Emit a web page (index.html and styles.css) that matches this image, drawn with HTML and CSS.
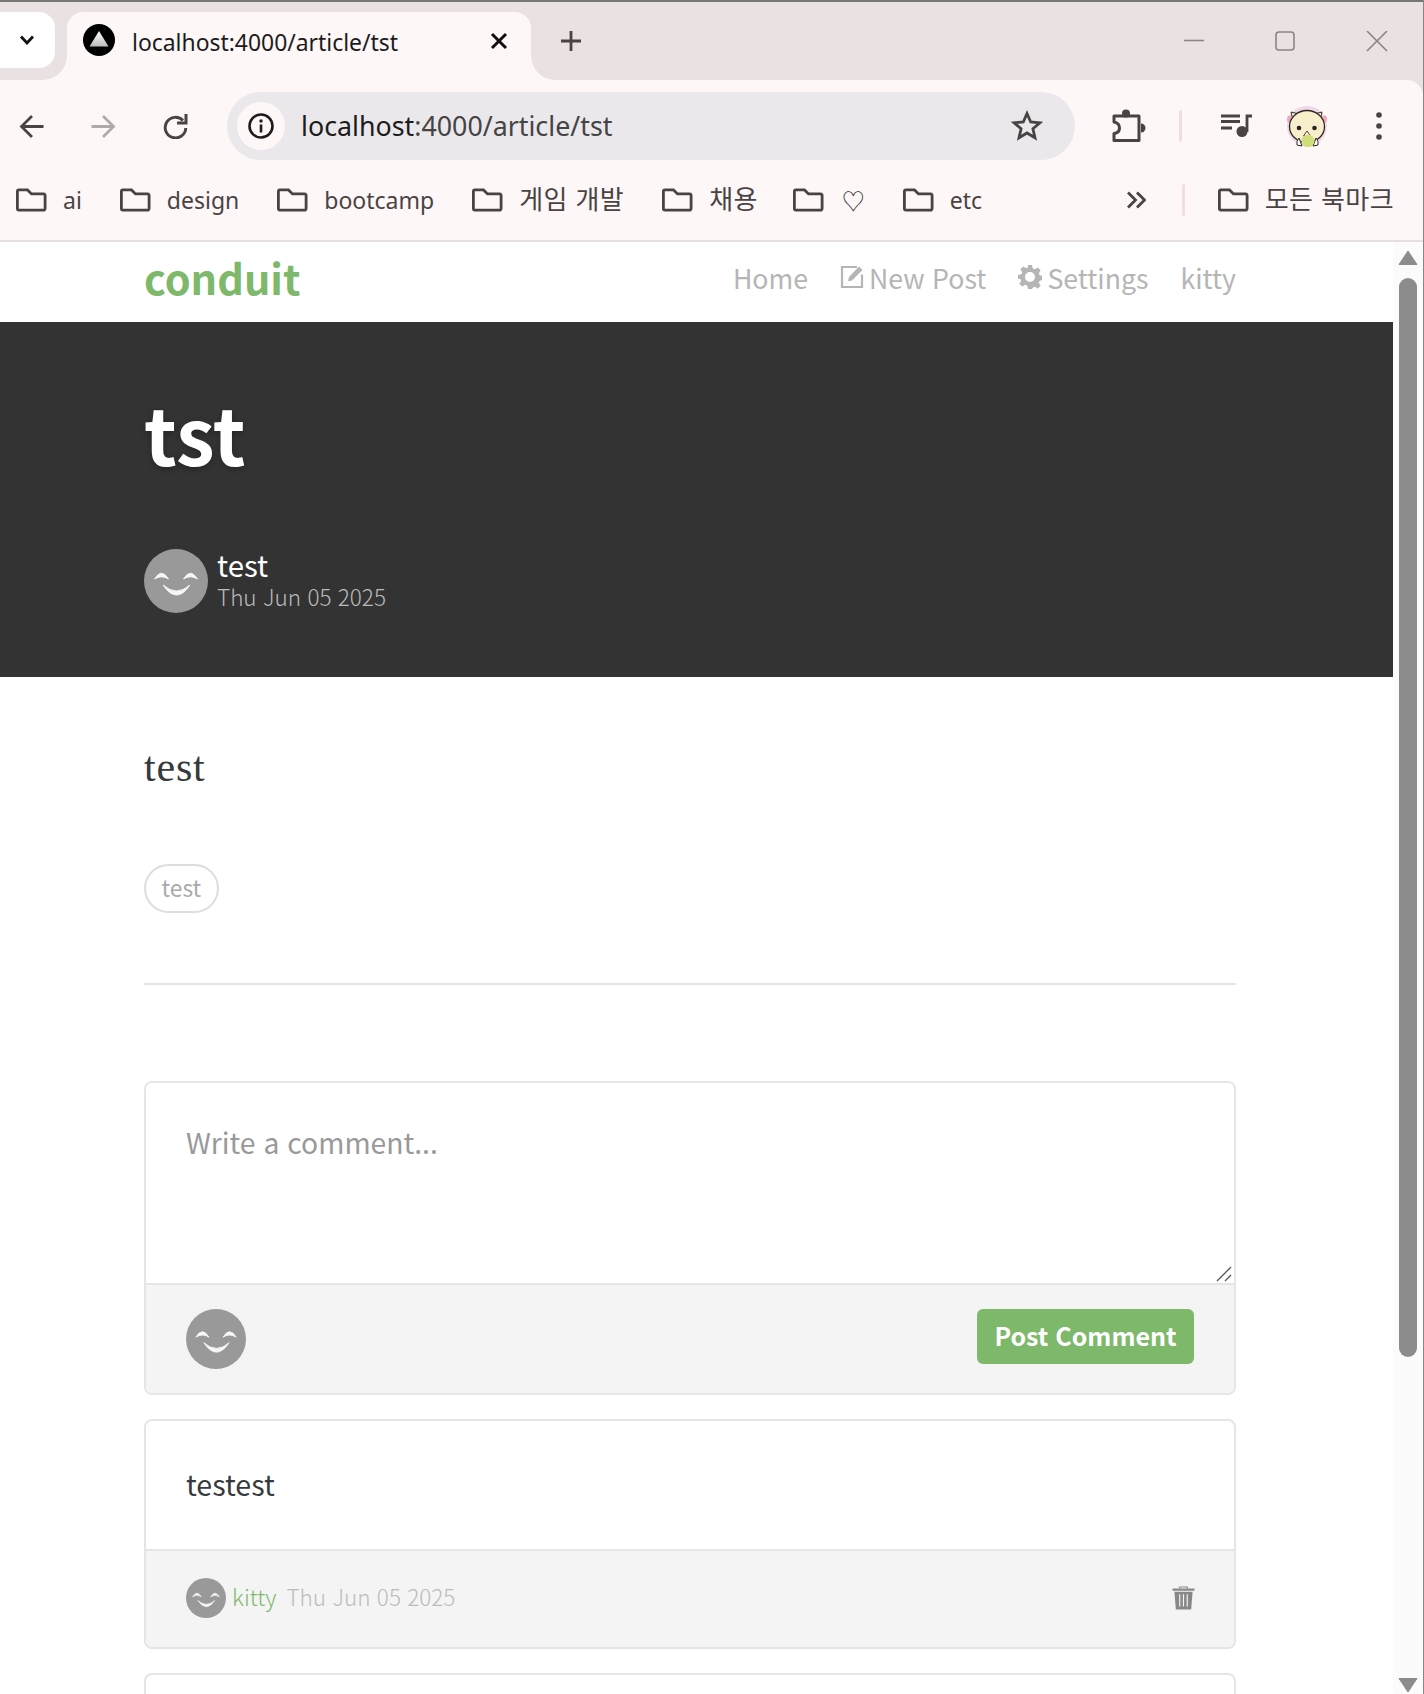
FILE: index.html
```html
<!DOCTYPE html>
<html lang="ko">
<head>
<meta charset="utf-8">
<title>tst</title>
<link rel="stylesheet" href="styles.css">
</head>
<body>
<svg class="defs" width="0" height="0" aria-hidden="true">
  <symbol id="folder" viewBox="0 0 32 24"><path d="M2.4 3.4a1.5 1.5 0 0 1 1.5-1.5h8.6l4 4h12.100a1.500 1.500 0 0 1 1.500 1.500v13.200a1.500 1.500 0 0 1-1.500 1.500H3.900a1.500 1.500 0 0 1-1.500-1.500z" fill="none" stroke="currentColor" stroke-width="2.800"/></symbol>
  <symbol id="smile" viewBox="0 0 64 64"><circle cx="32" cy="32" r="32" fill="#999"/><path d="M10.500 30Q17.500 18.500 24.500 30Q17.500 25.500 10.500 30ZM39.500 30Q46.500 18.500 53.500 30Q46.500 25.500 39.500 30ZM19 36Q32.500 56 46 36Q32.500 48 19 36Z" fill="#f6f6f6" stroke="#f6f6f6" stroke-width="1" stroke-linejoin="round"/></symbol>
</svg>

<header class="browser">
  <div class="tabstrip">
    <button class="tab-list"><svg width="16" height="10" viewBox="0 0 16 10"><path d="M2 1.500L8 8l6-6.500" fill="none" stroke="#111" stroke-width="2.800"/></svg></button>
    <div class="tab">
      <svg class="favicon" width="32" height="32" viewBox="0 0 32 32"><defs><linearGradient id="fav" x1="0" y1="0" x2="0" y2="1"><stop offset="0" stop-color="#fff"/><stop offset="1" stop-color="#bbb"/></linearGradient></defs><circle cx="16" cy="16" r="16" fill="#000"/><path d="M16 7l9.500 15.500h-19z" fill="url(#fav)"/></svg>
      <span class="tab-title">localhost:4000/article/tst</span>
      <svg class="tab-close" width="18" height="18" viewBox="0 0 18 18"><path d="M2 2l14 14M16 2L2 16" stroke="#111" stroke-width="3"/></svg>
    </div>
    <svg class="new-tab" width="22" height="22" viewBox="0 0 22 22"><path d="M11 1v20M1 11h20" stroke="#4a4343" stroke-width="2.800"/></svg>
    <div class="win-controls">
      <svg width="20" height="20" viewBox="0 0 20 20"><path d="M0 9.500h20" stroke="#8a8585" stroke-width="1.600"/></svg>
      <svg width="20" height="20" viewBox="0 0 20 20"><rect x="1" y="1" width="18" height="18" rx="3" fill="none" stroke="#8a8585" stroke-width="1.600"/></svg>
      <svg width="22" height="22" viewBox="0 0 22 22"><path d="M1 0l20 20M21 0L1 20" stroke="#8a8585" stroke-width="1.600"/></svg>
    </div>
  </div>

  <div class="toolbar">
    <svg class="tb-back" width="25" height="25" viewBox="0 0 25 25"><path d="M24.500 12.500H3M13 2L2.500 12.500 13 23" fill="none" stroke="#4a4343" stroke-width="2.800"/></svg>
    <svg class="tb-forward" width="25" height="25" viewBox="0 0 25 25"><path d="M.5 12.500H22M12 2l10.500 10.500L12 23" fill="none" stroke="#aeaaaa" stroke-width="2.800"/></svg>
    <svg class="tb-reload" width="25" height="25" viewBox="0 0 25 25"><path d="M20 6.500A10.300 10.300 0 1 0 22.800 14" fill="none" stroke="#4a4343" stroke-width="2.900"/><path d="M24.500 0v10.500H14V7.500h7.500V0z" fill="#4a4343"/></svg>
    <div class="omnibox">
      <div class="info-chip"><svg width="26" height="26" viewBox="0 0 26 26"><circle cx="13" cy="13" r="11.500" fill="none" stroke="#1c1c1c" stroke-width="2.600"/><circle cx="13" cy="8" r="1.700" fill="#1c1c1c"/><path d="M13 11.500v8" stroke="#1c1c1c" stroke-width="2.600"/></svg></div>
      <span class="url"><span class="url-host">localhost</span>:4000/article/tst</span>
      <svg class="star" width="32" height="32" viewBox="0 0 32 32"><path d="M16 3.500l3.700 8.500 9.200.8-7 6 2.100 9-8-4.800-8 4.800 2.100-9-7-6 9.200-.8z" fill="none" stroke="#4a4343" stroke-width="2.800" stroke-linejoin="miter"/></svg>
    </div>
    <svg class="tb-ext" width="34" height="34" viewBox="0 0 34 34"><path d="M2 7H27V31.500H2V24.500C6 24 7.500 21.500 7.500 19S6 13.500 2 13z" fill="none" stroke="#4a4343" stroke-width="3" stroke-linejoin="round"/><circle cx="14" cy="4.500" r="4" fill="#4a4343"/><path d="M27 14.500a4.500 4.500 0 0 1 0 9z" fill="#4a4343" transform="translate(2 0)"/></svg>
    <span class="tb-sep"></span>
    <svg class="tb-music" width="31" height="24" viewBox="0 0 31 24"><path d="M0 2h19M0 7.500h19M0 14h11M31 2H26v16" fill="none" stroke="#4a4343" stroke-width="2.800"/><circle cx="21" cy="17.500" r="5.500" fill="#4a4343"/></svg>
    <svg class="tb-avatar" width="42" height="42" viewBox="0 0 42 42">
      <circle cx="21" cy="21" r="20" fill="#edd9e9"/>
      <path d="M5 7l8 2-6 7zM36 7l-8 2 6 7z" fill="#f7efcc" stroke="#3a2f2a" stroke-width="1"/>
      <ellipse cx="3.500" cy="14" rx="2.500" ry="3.500" fill="#eba9bb"/><ellipse cx="38.500" cy="14" rx="2.500" ry="3.500" fill="#eba9bb"/>
      <ellipse cx="21" cy="21.500" rx="17.500" ry="16" fill="#f7efcc" stroke="#2e2622" stroke-width="1.300"/>
      <circle cx="13" cy="23" r="2.300" fill="#2a2320"/><circle cx="28.500" cy="23" r="2.300" fill="#2a2320"/>
      <path d="M17.500 31l3.500-5 3.500 5z" fill="#fff" stroke="#6b2f2f" stroke-width="1"/>
      <path d="M13 33q-3 3-2 7l5 1zM30 33q3 3 2 7l-5 1z" fill="#fff" stroke="#2e2622" stroke-width="1"/>
      <circle cx="22" cy="36" r="6.500" fill="#cfe07b"/>
    </svg>
    <svg class="tb-menu" width="6" height="28" viewBox="0 0 6 28"><circle cx="3" cy="3" r="2.800" fill="#4a4343"/><circle cx="3" cy="14" r="2.800" fill="#4a4343"/><circle cx="3" cy="25" r="2.800" fill="#4a4343"/></svg>
  </div>

  <nav class="bookmarks">
    <a class="bm"><svg class="bm-icon"><use href="#folder"/></svg><span>ai</span></a>
    <a class="bm"><svg class="bm-icon"><use href="#folder"/></svg><span>design</span></a>
    <a class="bm"><svg class="bm-icon"><use href="#folder"/></svg><span>bootcamp</span></a>
    <a class="bm"><svg class="bm-icon"><use href="#folder"/></svg><span class="ko">게임 개발</span></a>
    <a class="bm bm-tight"><svg class="bm-icon"><use href="#folder"/></svg><span class="ko">채용</span></a>
    <a class="bm"><svg class="bm-icon"><use href="#folder"/></svg><span class="heart">♡</span></a>
    <a class="bm"><svg class="bm-icon"><use href="#folder"/></svg><span>etc</span></a>
    <svg class="bm-more" width="20" height="18" viewBox="0 0 20 18"><path d="M2 1.500L9.500 9 2 16.500M11 1.500L18.500 9 11 16.500" fill="none" stroke="#4a4343" stroke-width="2.800"/></svg>
    <span class="bm-sep"></span>
    <a class="bm"><svg class="bm-icon"><use href="#folder"/></svg><span class="ko">모든 북마크</span></a>
  </nav>
</header>

<div class="viewport">
  <main class="page">
    <div class="navbar">
      <div class="container nav-inner">
        <a class="brand">conduit</a>
        <ul class="nav-links">
          <li>Home</li>
          <li class="with-icon"><svg width="24" height="24" viewBox="0 0 24 24"><path d="M17 2.500H2v20h20V10" fill="none" stroke="currentColor" stroke-width="2.200" transform="translate(0 -.5)"/><path d="M9 12l10-10.500 3.500 3.500L12 15.500l-4 .8z" fill="currentColor"/></svg>New Post</li>
          <li class="with-icon"><svg width="24" height="24" viewBox="0 0 24 24"><path fill-rule="evenodd" d="M10 0h4l.8 3.400 2 .9 3-1.800 2.800 2.800-1.800 3 .9 2 3.300.7v4l-3.300.8-.9 2 1.800 3-2.800 2.800-3-1.800-2 .9L14 24h-4l-.8-3.300-2-.9-3 1.800-2.800-2.800 1.800-3-.9-2L0 13.900v-4l3.300-.7.9-2-1.800-3 2.800-2.800 3 1.800 2-.9zM12 7a5 5 0 1 0 0 10 5 5 0 0 0 0-10z" fill="currentColor"/></svg>Settings</li>
          <li>kitty</li>
        </ul>
      </div>
    </div>

    <section class="hero">
      <div class="container">
        <h1>tst</h1>
        <div class="meta">
          <svg class="avatar-64"><use href="#smile"/></svg>
          <div class="meta-info">
            <a class="meta-name">test</a>
            <span class="meta-date">Thu Jun 05 2025</span>
          </div>
        </div>
      </div>
    </section>

    <div class="container content">
      <p class="article-body">test</p>
      <span class="tag">test</span>
      <hr class="rule">

      <form class="card">
        <div class="input-wrap">
          <textarea class="comment-input" placeholder="Write a comment..."></textarea>
          <svg class="grip" width="16" height="16" viewBox="0 0 16 16"><path d="M1 15L15 1M9 15l6-6" stroke="#555" stroke-width="1.300"/></svg>
        </div>
        <div class="card-foot form-foot">
          <svg class="avatar-60"><use href="#smile"/></svg>
          <button class="post-btn" type="button">Post Comment</button>
        </div>
      </form>

      <article class="card">
        <div class="card-text">testest</div>
        <div class="card-foot comment-foot">
          <svg class="avatar-40"><use href="#smile"/></svg>
          <a class="comment-author">kitty</a>
          <span class="comment-date">Thu Jun 05 2025</span>
          <svg class="trash" width="23" height="25" viewBox="0 0 24 25"><path d="M8 3V1.500h8V3" fill="none" stroke="#888" stroke-width="1.200"/><path d="M.5 3h23v2.500H.5z" fill="#888"/><path fill-rule="evenodd" d="M2.500 6.500h19L20 25H4zM7.500 9v13h1.200V9zM11.400 9v13h1.200V9zM15.300 9v13h1.200V9z" fill="#888"/></svg>
        </div>
      </article>

      <article class="card card-empty"></article>
    </div>
  </main>

  <aside class="scrollbar">
    <svg width="20" height="15" viewBox="0 0 20 15"><path d="M10 1l9 13.500H1z" fill="#8c8c8c" stroke="#8c8c8c" stroke-linejoin="round"/></svg>
    <div class="thumb"></div>
    <svg class="arrow-down" width="20" height="15" viewBox="0 0 20 15"><path d="M10 14L1 .5h18z" fill="#8c8c8c" stroke="#8c8c8c" stroke-linejoin="round"/></svg>
  </aside>
</div>
</body>
</html>
```

FILE: styles.css
```css
* { box-sizing: border-box; }
html, body { margin: 0; height: 100%; }
body {
  width: 1424px;
  height: 1694px;
  overflow: hidden;
  background: #fff;
  display: flex;
  flex-direction: column;
  border-right: 1px solid #8a8585;
  font-family: "Noto Sans CJK KR", "Noto Sans", sans-serif;
}
.defs { position: absolute; }

/* browser chrome */
.browser {
  background: #e9e1e2;
  border-top: 2px solid #777;
  font-family: "Noto Sans", "Noto Sans CJK KR", sans-serif;
  color: #1c1c1c;
}
.tabstrip {
  height: 78px;
  display: flex;
  align-items: flex-start;
  padding-top: 10px;
}
.tab-list {
  width: 55px;
  height: 56px;
  border: 0;
  background: #fff;
  border-radius: 0 16px 16px 0;
  display: flex;
  align-items: center;
  justify-content: center;
  padding: 0 1px 0 0;
}
.tab {
  position: relative;
  margin-left: 12px;
  width: 464px;
  height: 68px;
  background: #fdf7f7;
  border-radius: 16px 16px 0 0;
  display: flex;
  align-items: flex-start;
  padding: 12px 23px 0 16px;
}
.tab::before, .tab::after {
  content: "";
  position: absolute;
  bottom: 0;
  width: 24px;
  height: 24px;
}
.tab::before { left: -24px; background: radial-gradient(circle at 0 0, transparent 23.500px, #fdf7f7 24px); }
.tab::after { right: -24px; background: radial-gradient(circle at 100% 0, transparent 23.500px, #fdf7f7 24px); }
.tab-title {
  margin-left: 17px;
  flex: 1;
  font-size: 22.900px;
  line-height: 32px;
  margin-top: 3px;
}
.tab-close { margin-top: 8px; }
.new-tab { margin: 18px 0 0 29px; }
.win-controls {
  margin-left: auto;
  margin-top: 19px;
  padding-right: 35px;
  display: flex;
  gap: 71px;
}

.toolbar {
  height: 81px;
  background: #fdf7f7;
  border-radius: 0 16px 0 0;
  display: flex;
  align-items: center;
  padding: 12px 0 1px 19px;
}
.tb-forward { margin-left: 47px; }
.tb-reload { margin-left: 47px; }
.omnibox {
  margin-left: 39px;
  width: 848px;
  height: 68px;
  border-radius: 34px;
  background: #ebe8ec;
  display: flex;
  align-items: center;
  padding: 0 32px 0 10px;
}
.info-chip {
  width: 48px;
  height: 48px;
  border-radius: 50%;
  background: #fdf7f7;
  display: flex;
  align-items: center;
  justify-content: center;
}
.url {
  margin: -2px 0 0 16px;
  flex: 1;
  font-size: 26.800px;
  color: #444;
}
.url-host { color: #1c1c1c; }
.tb-ext { margin-left: 37px; }
.tb-sep {
  margin-left: 33px;
  width: 3px;
  height: 32px;
  border-radius: 2px;
  background: #f3dde3;
}
.tb-music { margin-left: 39px; }
.tb-avatar { margin-left: 34px; }
.tb-menu { margin-left: 48px; }

.bookmarks {
  height: 81px;
  background: #fdf7f7;
  border-bottom: 2px solid #e5dfe0;
  display: flex;
  align-items: center;
  padding: 0 0 2px 15px;
  font-size: 23px;
  color: #4a4343;
}
.bm { display: flex; align-items: center; gap: 16px; margin-right: 37px; }
.bm-tight { margin-right: 34px; }
.bm-icon { width: 32px; height: 24px; }
.ko { font-family: "Noto Sans CJK KR", sans-serif; font-size: 26px; letter-spacing: .4px; margin-top: -4px; }
.heart { font-family: "Noto Sans CJK KR", sans-serif; font-size: 23px; color: #333; margin-left: 2px; }
.bm-more { margin-left: auto; }
.bm-sep {
  margin: 0 32px 0 36px;
  width: 3px;
  height: 32px;
  border-radius: 2px;
  background: #f3dde3;
}
.bookmarks .bm:last-child { margin-right: 29px; }

/* viewport */
.viewport {
  flex: 1;
  min-height: 0;
  display: flex;
  overflow: hidden;
}
.page { width: 1393px; flex: none; }
.container { margin-left: 144px; width: 1092px; }

.navbar { height: 80px; display: flex; align-items: center; padding-bottom: 9px; }
.nav-inner { display: flex; justify-content: space-between; align-items: center; }
.brand {
  color: #7eb86b;
  font-weight: 700;
  font-size: 41.500px;
  line-height: 60px;
  margin-top: -2px;
}
.nav-links {
  list-style: none;
  margin: 0;
  padding: 0;
  display: flex;
  gap: 32px;
  color: #b5b5b5;
  font-size: 26.700px;
  line-height: 40px;
}
.with-icon { display: flex; align-items: center; gap: 5px; }
.with-icon svg { margin-top: -2px; }

.hero {
  height: 355px;
  background: #333;
  color: #fff;
  padding-top: 60px;
}
.hero h1 {
  margin: 0;
  font-size: 78px;
  font-weight: 700;
  line-height: 100px;
  text-shadow: 0 2px 6px rgba(0, 0, 0, .3);
}
.meta {
  margin-top: 67px;
  display: flex;
  gap: 9px;
}
.avatar-64 { width: 64px; height: 64px; flex: none; }
.meta-info { display: flex; flex-direction: column; margin-top: -1px; }
.meta-name { font-size: 29.400px; line-height: 32px; }
.meta-date { font-size: 22.500px; line-height: 32px; color: #bbb; font-weight: 300; }

.content { padding-top: 1px; }
.article-body {
  margin: 59px 0 0;
  font-family: "Liberation Serif", serif;
  font-size: 42px;
  letter-spacing: .8px;
  line-height: 60px;
  color: #373a3c;
}
.tag {
  margin-top: 67px;
  display: inline-flex;
  align-items: center;
  height: 49px;
  padding: 0 15.500px 2px;
  border: 2px solid #ddd;
  border-radius: 25px;
  font-size: 22.800px;
  color: #aaa;
}
.rule {
  margin: 70px 0 0;
  border: 0;
  border-top: 2px solid #e5e5e5;
}
.card {
  display: block;
  border: 2px solid #e5e5e5;
  border-radius: 8px;
  overflow: hidden;
  margin-top: 24px;
}
form.card { margin-top: 96px; height: 314px; display: flex; flex-direction: column; }
.input-wrap { position: relative; height: 200px; flex: none; }
.comment-input {
  display: block;
  width: 100%;
  height: 100%;
  border: 0;
  outline: 0;
  padding: 37px 40px;
  font: 400 28.300px/44px "Noto Sans CJK KR", sans-serif;
  color: #373a3c;
  resize: none;
  background: #fff;
}
.comment-input::placeholder { color: #999; opacity: 1; }
.grip { position: absolute; right: 2px; bottom: 1px; }
.card-foot {
  background: #f4f4f4;
  border-top: 2px solid #e5e5e5;
  display: flex;
  padding: 0 40px;
}
.form-foot { flex: 1; justify-content: space-between; padding-top: 24px; }
.avatar-60 { width: 60px; height: 60px; }
.post-btn {
  height: 55px;
  width: 217px;
  border: 0;
  border-radius: 6px;
  background: #7eb86b;
  color: #fff;
  font: 700 25px/1 "Noto Sans CJK KR", sans-serif;
  padding: 0 0 2px;
}
.card-text {
  height: 128px;
  padding: 0 40px 4px;
  display: flex;
  align-items: center;
  font-size: 28.600px;
  color: #373a3c;
}
.comment-foot { height: 98px; align-items: center; padding-bottom: 3px; }
.avatar-40 { width: 40px; height: 40px; }
.comment-author { margin: -3px 0 0 6px; font-size: 22.800px; font-weight: 300; color: #7eb86b; }
.comment-date { margin: -3px 0 0 10px; font-size: 22.500px; font-weight: 300; color: #bbb; }
.trash { margin: 0 -1px 0 auto; }
.card-empty { height: 120px; }

.scrollbar {
  width: 30px;
  flex: none;
  background: #fbfbfb;
  display: flex;
  flex-direction: column;
  align-items: center;
  padding: 8px 0 1px;
}
.thumb {
  margin-top: 13px;
  width: 18px;
  height: 1079px;
  background: #8c8c8c;
  border-radius: 9px;
}
.arrow-down { margin-top: auto; }
```
